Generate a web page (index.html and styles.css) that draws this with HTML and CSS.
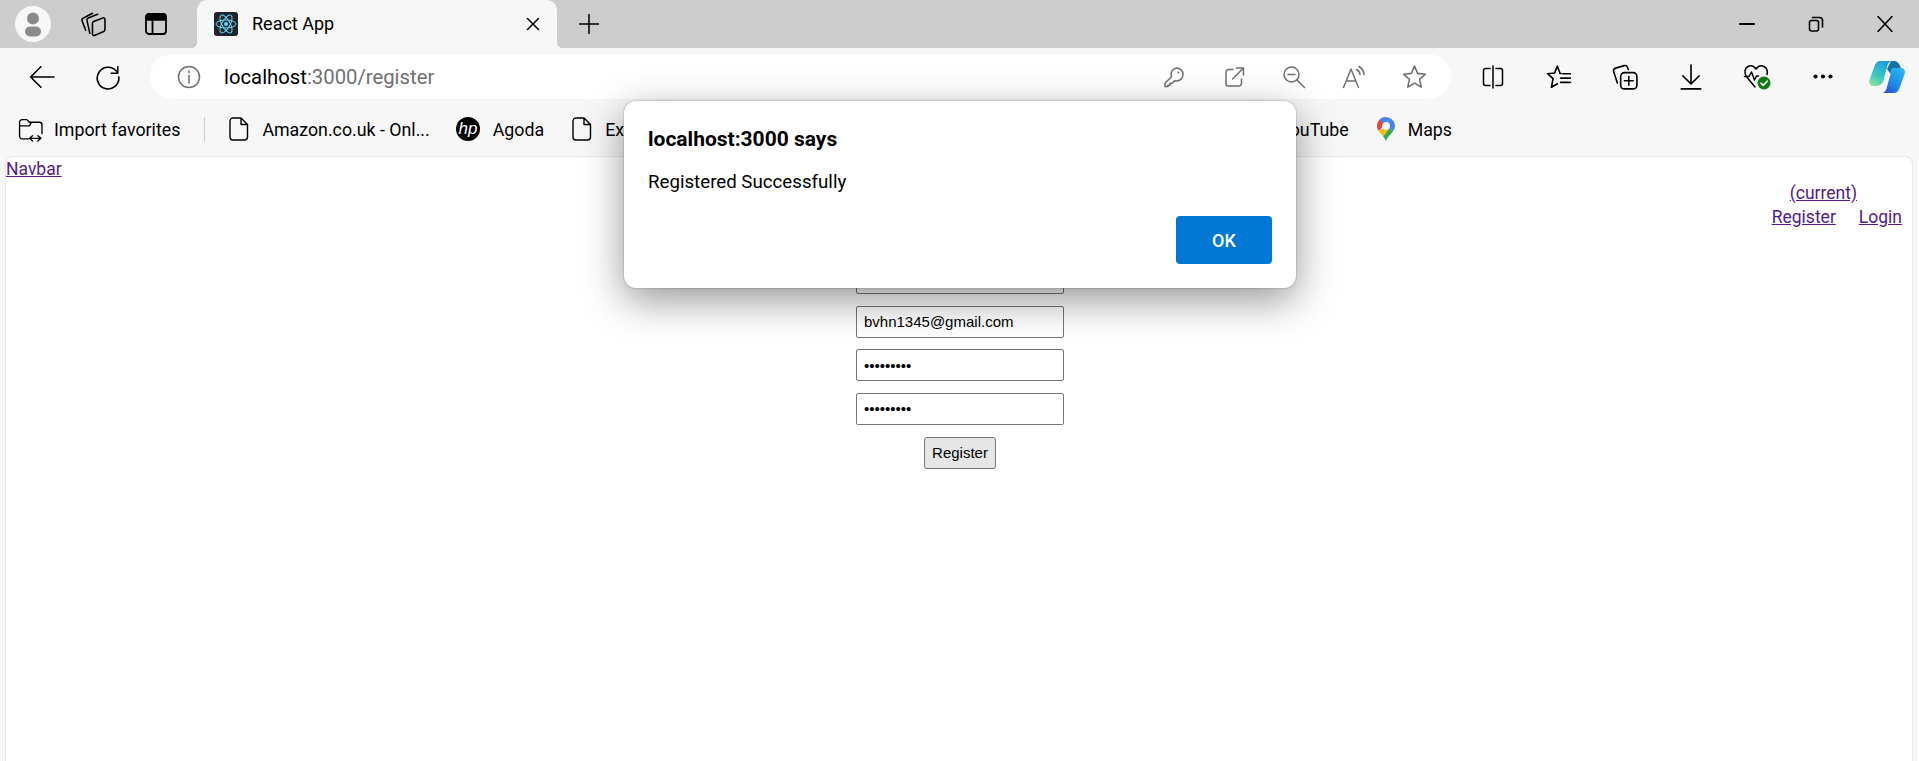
FILE: index.html
```html
<!DOCTYPE html>
<html>
    <head>
        <meta charset="utf-8">
        <title>React App</title>
        <link rel="stylesheet" href="styles.css">
    </head>
    <body>
        <header class="tabstrip">
            <span class="avatar">
                <svg viewBox="0 0 36 36" width="36" height="36"><circle cx="18" cy="12.5" r="6" fill="#8a8a8a"/><rect x="10" y="20.5" width="16" height="10" rx="5" fill="#8a8a8a"/></svg>
            </span>
            <span class="strip-btn">
                <svg class="icon" viewBox="0 0 24 24" width="25" height="25"><path d="M12 9.200 21 5.700a1.500 1.500 0 0 1 2 1.400V17a2 2 0 0 1-1.300 1.800L13 22.500a1.500 1.500 0 0 1-2-1.400V11a2 2 0 0 1 1-1.800z"/><path d="M8.500 20.500 5.700 8A2 2 0 0 1 7 5.700l9-3.500"/><path d="M4.500 17.500 1 8.500A2 2 0 0 1 2 6l9-4.800"/></svg>
            </span>
            <span class="strip-btn">
                <svg class="icon" viewBox="0 0 24 24" width="24" height="24"><rect x="2" y="2" width="20" height="20" rx="3" stroke-width="1.800"/><path d="M2 5a3 3 0 0 1 3-3h14a3 3 0 0 1 3 3v3H2z" fill="#000"/><path d="M8.500 8v14" stroke-width="1.800"/></svg>
            </span>
            <div class="tab">
                <svg class="favicon" viewBox="0 0 24 24" width="24" height="24"><rect width="24" height="24" rx="3" fill="#20232a"/><g fill="none" stroke="#61dafb" stroke-width="1"><ellipse cx="12" cy="12" rx="10" ry="4"/><ellipse cx="12" cy="12" rx="10" ry="4" transform="rotate(60 12 12)"/><ellipse cx="12" cy="12" rx="10" ry="4" transform="rotate(120 12 12)"/></g><circle cx="12" cy="12" r="2" fill="#61dafb"/></svg>
                <span class="tab-title">React App</span>
                <svg class="icon" viewBox="0 0 14 14" width="14" height="14"><path d="M1.5 1.5l11 11M12.500 1.500l-11 11"/></svg>
            </div>
            <span class="new-tab">
                <svg class="icon" viewBox="0 0 20 20" width="20" height="20"><path d="M10 0v20M0 10h20"/></svg>
            </span>
            <div class="window-controls">
                <span class="strip-control"><svg class="icon" viewBox="0 0 16 16" width="16" height="16"><path d="M1 8h14" stroke-width="2"/></svg></span>
                <span class="strip-control"><svg class="icon" viewBox="0 0 16 16" width="16" height="16"><rect x="1.500" y="4.500" width="9" height="10.500" rx="2" stroke-width="1.600"/><path d="M4.500 1.500h7a3 3 0 0 1 3 3V11" stroke-width="1.600"/></svg></span>
                <span class="strip-control"><svg class="icon" viewBox="0 0 16 16" width="16" height="16"><path d="M1 .5l14 15M15 .5l-14 15" stroke-width="1.500"/></svg></span>
            </div>
        </header>

        <div class="toolbar">
            <span class="tool">
                <svg class="icon" viewBox="0 0 24 24" width="26" height="26"><path d="M23 12H1.500M11 2.500 1.500 12 11 21.500"/></svg>
            </span>
            <span class="tool">
                <svg class="icon" viewBox="0 0 24 24" width="26" height="26"><path d="M20.700 8A10 10 0 1 0 22 12"/><path d="M21 2.500V8.500h-6"/></svg>
            </span>
            <div class="address-bar">
                <svg class="icon info-icon" viewBox="0 0 24 24" width="24" height="24"><circle cx="12" cy="12" r="10.500"/><path d="M12 10.500V18M12 6v1.800"/></svg>
                <span class="url"><span class="url-host">localhost</span>:3000/register</span>
                <span class="bar-tool">
                    <svg class="icon" viewBox="0 0 24 24" width="24" height="24"><path d="M14.500 3a6.500 6.500 0 0 1 0 13c-.7 0-1.400-.1-2-.3L10 18.200H8v2H6v1.300H3v-3.200l6.500-6.500A6.500 6.500 0 0 1 14.500 3z"/><circle cx="16.500" cy="7.500" r="1" fill="#707070" stroke="none"/></svg>
                </span>
                <span class="bar-tool">
                    <svg class="icon" viewBox="0 0 24 24" width="24" height="24"><path d="M11 4.500H6.500A2.500 2.500 0 0 0 4 7v12a2 2 0 0 0 2 2h11a2.500 2.500 0 0 0 2.500-2.500V14M10.500 14 21 3.500M14.500 3h7v7"/></svg>
                </span>
                <span class="bar-tool">
                    <svg class="icon" viewBox="0 0 24 24" width="24" height="24"><circle cx="9.500" cy="9.500" r="7.500"/><path d="M15 15l7.500 7.500M6 9.500h7"/></svg>
                </span>
                <span class="bar-tool">
                    <svg class="icon" viewBox="0 0 24 24" width="24" height="24"><path d="M1.500 22.500 9 4l7.500 18.500M4.300 16h9.500M14.500 4.500a6 6 0 0 1 3.500 5M17 1.500a10 10 0 0 1 5 8"/></svg>
                </span>
                <span class="bar-tool">
                    <svg class="icon" viewBox="0 0 24 24" width="25" height="25"><path d="M12 2l3 7 7.500.8-5.700 5 1.700 7.400L12 18.300l-6.500 3.900 1.700-7.400-5.700-5L9 9z"/></svg>
                </span>
            </div>
            <div class="tools-right">
                <span class="tool">
                    <svg class="icon" viewBox="0 0 24 24" width="24" height="24"><path d="M9 3.500H4.500a2 2 0 0 0-2 2v13a2 2 0 0 0 2 2H9M15 3.500h4.500a2 2 0 0 1 2 2v13a2 2 0 0 1-2 2H15M12 1v22"/></svg>
                </span>
                <span class="tool">
                    <svg class="icon" viewBox="0 0 24 24" width="26" height="26"><path d="M10.500 2 13 8.800h1M10.500 2 8 8.300l-6.500.7 5 4.500-1.500 8 5.500-3.200M15.500 9h7M13.500 13h9M13.500 17h9"/></svg>
                </span>
                <span class="tool">
                    <svg class="icon" viewBox="0 0 24 24" width="26" height="26"><rect x="8" y="8" width="15" height="15" rx="3.500"/><path d="M15.500 11.500v8M11.500 15.500h8M5 17.500 1.500 7a2.500 2.500 0 0 1 1.800-3.200l8-2.300a2.500 2.500 0 0 1 3 1.600L15 5"/></svg>
                </span>
                <span class="tool">
                    <svg class="icon" viewBox="0 0 24 24" width="26" height="26"><path d="M12 1v17M4.500 11 12 18.500 19.500 11M3 23h18"/></svg>
                </span>
                <span class="tool health">
                    <svg class="icon" viewBox="0 0 28 28" width="28" height="28"><path d="M7 18 3.500 13.500C1 10 1.500 5.500 5 3.500c3-1.500 6-.5 8 2.500 2-3 5-4 8-2.500 3 1.500 3.800 4.500 3 8M1.500 13.500H6L8.500 9l3 8 2-4h2M7 18l5 6"/><circle cx="21" cy="20" r="6.500" fill="#107c10" stroke="none"/><path d="M18 20.200l2.200 2.200 4-4.200" stroke="#fff" stroke-width="1.600"/></svg>
                </span>
                <span class="tool">
                    <svg viewBox="0 0 24 6" width="20" height="5"><circle cx="3" cy="3" r="2.500"/><circle cx="12" cy="3" r="2.500"/><circle cx="21" cy="3" r="2.500"/></svg>
                </span>
                <span class="tool copilot">
                    <svg viewBox="0 0 36 32" width="36" height="32">
                        <defs>
                            <linearGradient id="cp-left" x1="0.700" y1="0" x2="0.200" y2="1"><stop offset="0" stop-color="#1b9de2"/><stop offset="0.600" stop-color="#3cc8c0"/><stop offset="1" stop-color="#8fe3a0"/></linearGradient>
                            <linearGradient id="cp-right" x1="0.800" y1="0" x2="0.200" y2="1"><stop offset="0" stop-color="#2bb4f0"/><stop offset="0.600" stop-color="#1a8ce8"/><stop offset="1" stop-color="#2a52d8"/></linearGradient>
                        </defs>
                        <path d="M22 0h3c3 0 5 2 6 5l1 2h-7c-2 0-3 2-3.500 6L18 8z" fill="#136fa8"/>
                        <path d="M11 0H22C20 1 18.500 3 18 6L14.500 19C13.500 23 11 25 7 25H4C1 25-.5 22.500.3 19.500L5.500 5C6.500 2 8.500 0 11 0Z" fill="url(#cp-left)"/>
                        <path d="M25 7H32C35 7 36.500 9.500 35.700 12.500L30.500 27C29.500 30 27.500 32 25 32H14C16 31 17.500 29 18 26L21.500 13C22.300 9.500 23 7 25 7Z" fill="url(#cp-right)"/>
                    </svg>
                </span>
            </div>
        </div>

        <nav class="favorites">
            <div class="fav-group">
                <svg class="icon fav-icon fav-import" viewBox="0 0 24 24" width="25" height="25"><path d="M10 21H4a2.500 2.500 0 0 1-2.500-2.500V5A2.500 2.500 0 0 1 4 2.500h4.500L11 5h9.500A2.500 2.500 0 0 1 23 7.500V16M1.500 8.500h9.500l2-3.500M11 20.500h11M14 18l-3 2.500 3 2.500M19 18l3 2.500-3 2.500" stroke-width="1.300"/></svg>
                <span class="fav-label">Import favorites</span>
                <span class="fav-divider"></span>
                <svg class="icon fav-icon" viewBox="0 0 20 24" width="20" height="24"><path d="M4 1h8l6.500 6.500V20a3 3 0 0 1-3 3H4a3 3 0 0 1-3-3V4a3 3 0 0 1 3-3zM12 1v6.500h6.500" stroke-width="1.400"/></svg>
                <span class="fav-label">Amazon.co.uk - Onl...</span>
                <svg class="fav-icon" viewBox="0 0 24 24" width="24" height="24"><circle cx="12" cy="12" r="12" fill="#000"/><text x="12" y="17" class="hp-mark">hp</text></svg>
                <span class="fav-label">Agoda</span>
                <svg class="icon fav-icon fav-wide" viewBox="0 0 20 24" width="20" height="24"><path d="M4 1h8l6.500 6.500V20a3 3 0 0 1-3 3H4a3 3 0 0 1-3-3V4a3 3 0 0 1 3-3zM12 1v6.500h6.500" stroke-width="1.400"/></svg>
                <span class="fav-label">Ex</span>
            </div>
            <div class="fav-group">
                <span class="fav-label">YouTube</span>
                <svg class="fav-icon fav-pin" viewBox="0 0 18 24" width="18" height="24"><path d="M9 0C4 0 0 4 0 9c0 2 .7 3.500 1.700 5L5 10.500V9a4 4 0 0 1 1-2.800z" fill="#ea4335"/><path d="M6 6.200A4 4 0 0 1 9 5h.2L13.700 1.500A9 9 0 0 0 9 0 9 9 0 0 0 2.500 2.800z" fill="#4285f4"/><path d="M13 9a4 4 0 0 1-1 2.700L16.500 13.500C17.500 12 18 10.500 18 9c0-3-1.700-6-4.300-7.500L9.200 5A4 4 0 0 1 13 9z" fill="#4285f4"/><path d="M5 9c0 1 .4 2 1 2.700L1.700 14c1.300 2 3 3.500 4.500 5.500L12 11.700A4 4 0 0 1 5 9z" fill="#fbbc04"/><path d="M6.200 19.500C7.500 21 8.500 22.500 9 24c.5-1.500 1.500-3.300 3-5 1.800-2 3.300-3.500 4.500-5.500L12 11.700z" fill="#34a853"/><circle cx="9" cy="9" r="3.200" fill="#fff"/></svg>
                <span class="fav-label">Maps</span>
            </div>
        </nav>

        <main class="page">
            <div class="page-nav">
                <a href="#">Navbar</a>
                <div class="nav-links">
                    <div class="nav-row nav-current"><a href="#">(current)</a></div>
                    <div class="nav-row"><a href="#">Register</a><a href="#">Login</a></div>
                </div>
            </div>
            <form class="register-form">
                <input class="field" type="text" value="bvhn">
                <input class="field" type="email" value="bvhn1345@gmail.com">
                <input class="field" type="password" value="123456789">
                <input class="field" type="password" value="123456789">
                <button class="submit" type="button">Register</button>
            </form>
        </main>

        <div class="alert-dialog">
            <h1 class="alert-title">localhost:3000 says</h1>
            <p class="alert-message">Registered Successfully</p>
            <div class="alert-actions">
                <button class="alert-ok" type="button">OK</button>
            </div>
        </div>
    </body>
</html>
```

FILE: styles.css
```css
* { box-sizing: border-box; }

html, body { height: 100%; }

body {
    margin: 0;
    display: flex;
    flex-direction: column;
    overflow: hidden;
    background: #F7F7F7;
    color: #000;
    font-family: Roboto, "Liberation Sans", sans-serif;
}

.icon {
    fill: none;
    stroke: currentColor;
    stroke-width: 1.5;
    stroke-linecap: round;
    stroke-linejoin: round;
    flex: none;
}

/* tab strip */
.tabstrip {
    display: flex;
    align-items: center;
    flex: none;
    height: 48px;
    padding-left: 15px;
    background: #CDCDCD;
}
.avatar {
    width: 36px;
    height: 36px;
    border-radius: 50%;
    background: #F7F7F7;
}
.avatar svg { display: block; }
.strip-btn {
    display: flex;
    justify-content: center;
    width: 63px;
}
.strip-btn:nth-child(2) { margin-left: 11px; width: 62px; }
.tab {
    position: relative;
    display: flex;
    align-items: center;
    align-self: flex-end;
    gap: 14px;
    width: 360px;
    height: 48px;
    margin-left: 10px;
    padding: 0 17px;
    background: #F7F7F7;
    border-radius: 10px 10px 0 0;
}
.tab::before, .tab::after {
    content: "";
    position: absolute;
    bottom: 0;
    width: 6px;
    height: 6px;
}
.tab::before {
    left: -6px;
    background: radial-gradient(circle at 0 0, #CDCDCD 6px, #F7F7F7 6.5px);
}
.tab::after {
    right: -6px;
    background: radial-gradient(circle at 100% 0, #CDCDCD 6px, #F7F7F7 6.5px);
}
.tab-title {
    flex: 1;
    padding-bottom: 2px;
    font-size: 18px;
}
.new-tab {
    display: flex;
    margin-left: 22px;
}
.window-controls {
    display: flex;
    margin-left: auto;
}
.strip-control {
    display: flex;
    justify-content: center;
    width: 69px;
}

/* address bar row */
.toolbar {
    display: flex;
    align-items: center;
    flex: none;
    height: 59px;
    padding: 6px 1px 8px 9px;
}
.tool {
    display: flex;
    justify-content: center;
    align-items: center;
    width: 66px;
}
.address-bar {
    display: flex;
    align-items: center;
    flex: 1;
    height: 45px;
    margin: 0 9px;
    padding: 0 7px 0 27px;
    background: #fff;
    border-radius: 23px;
}
.info-icon { color: #707070; }
.url {
    flex: 1;
    margin-left: 23px;
    font-size: 20.3px;
    color: #707070;
}
.url-host { color: #000; }
.bar-tool {
    display: flex;
    justify-content: center;
    width: 60px;
    color: #707070;
}
.tools-right { display: flex; align-items: center; }
.copilot { width: 62px; }

/* favorites bar */
.favorites {
    display: flex;
    align-items: center;
    justify-content: space-between;
    flex: none;
    height: 49px;
    padding: 0 467px 5px 18px;
}
.fav-group {
    display: flex;
    align-items: center;
}
.fav-label {
    font-size: 17.8px;
    white-space: nowrap;
}
.fav-icon { margin-right: 13px; }
.fav-import { margin-right: 11px; }
.fav-divider {
    width: 1px;
    height: 24px;
    margin: 0 24px;
    background: #CFCFCF;
}
.fav-label + .fav-icon { margin-left: 26px; }
.fav-divider + .fav-icon { margin-left: 0; }
.fav-label + .fav-wide { margin-left: 28px; }
.fav-label + .fav-pin { margin-left: 28px; }
.hp-mark {
    fill: #fff;
    font: italic 400 17px "Liberation Sans", sans-serif;
    text-anchor: middle;
}

/* the page itself */
.page {
    flex: 1;
    margin: 0 6px 0 5px;
    background: #fff;
    border: 1px solid #E8E8E8;
    border-bottom: 0;
    border-radius: 8px 8px 0 0;
    font-size: 17.5px;
}
.page a { color: #551A8B; }
.page-nav {
    display: flex;
    justify-content: space-between;
    align-items: flex-start;
    line-height: 24px;
}
.nav-links { padding: 24px 10px 0 0; }
.nav-row {
    display: flex;
    justify-content: flex-end;
    gap: 23px;
}
.nav-current { padding-right: 45px; }
.register-form {
    display: flex;
    flex-direction: column;
    align-items: center;
    gap: 11.5px;
    margin-top: 33px;
    padding-left: 2px;
}
.field {
    width: 208px;
    height: 32px;
    padding: 0 7px;
    background: #fff;
    border: 1px solid #767676;
    border-radius: 2px;
    font: 15px "Liberation Sans", sans-serif;
    color: #000;
}
.submit {
    width: 72px;
    height: 32px;
    margin-top: 0.5px;
    padding: 0;
    background: #E6E6E6;
    border: 1px solid #767676;
    border-radius: 3px;
    font: 15px "Liberation Sans", sans-serif;
    color: #000;
}

/* alert dialog, sits over everything */
.alert-dialog {
    position: absolute;
    top: 101px;
    left: 624px;
    width: 672px;
    height: 187px;
    padding: 24px;
    background: #fff;
    border-radius: 12px;
    box-shadow: 0 0 2px rgba(0, 0, 0, 0.35), 0 12px 40px rgba(0, 0, 0, 0.42);
}
.alert-title {
    margin: 0;
    font-size: 21px;
    font-weight: 700;
    line-height: 28px;
}
.alert-message {
    margin: 15px 0 0;
    font-size: 18.7px;
    line-height: 28px;
}
.alert-actions {
    display: flex;
    justify-content: flex-end;
    margin-top: 20px;
}
.alert-ok {
    width: 96px;
    height: 48px;
    padding: 0;
    background: #0078D4;
    border: 0;
    border-radius: 4px;
    color: #fff;
    font: 500 18px Roboto, sans-serif;
}
```
